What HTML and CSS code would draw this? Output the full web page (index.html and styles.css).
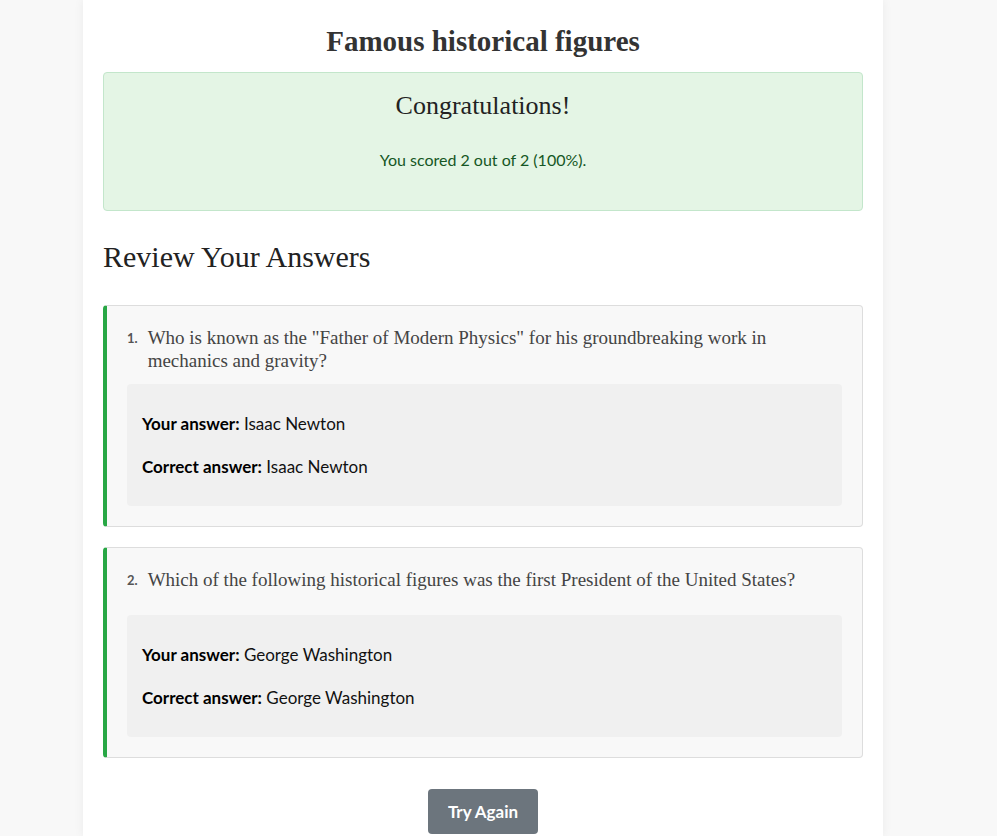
FILE: index.html
```html
<!DOCTYPE html>
<html lang="en">
  <head>
    <meta charset="UTF-8" />
    <meta name="viewport" content="width=device-width, initial-scale=1.0" />
    <title>Quiz results</title>
    <link rel="stylesheet" href="styles.css">
  </head>
  <body>
    <main class="quiz">
      <h1 class="quiz-title">Famous historical figures</h1>

      <div class="result">
        <h2>Congratulations!</h2>
        <p>You scored 2 out of 2 (100%).</p>
      </div>

      <h2 class="review-title">Review Your Answers</h2>

      <div class="review-item correct">
        <div class="question">
          <span class="num">1.</span>
          <span class="text">Who is known as the "Father of Modern Physics" for his groundbreaking work in mechanics and gravity?</span>
        </div>
        <div class="answers">
          <p><strong>Your answer:</strong> Isaac Newton</p>
          <p><strong>Correct answer:</strong> Isaac Newton</p>
        </div>
      </div>

      <div class="review-item correct">
        <div class="question">
          <span class="num">2.</span>
          <span class="text">Which of the following historical figures was the first President of the United States?</span>
        </div>
        <div class="answers">
          <p><strong>Your answer:</strong> George Washington</p>
          <p><strong>Correct answer:</strong> George Washington</p>
        </div>
      </div>

      <div class="actions">
        <button class="btn">Try Again</button>
      </div>
    </main>
  </body>
</html>
```

FILE: styles.css
```css
* {
  box-sizing: border-box;
}
body {
  margin: 0;
  padding-right: 31px;
  background-color: #f8f8f8;
  font-family: Lato, "Noto Sans", sans-serif;
  color: #222;
}
.quiz {
  width: 800px;
  margin: 0 auto;
  padding: 20px 20px 0;
  background-color: #fff;
  box-shadow: 0 0 10px rgba(0, 0, 0, 0.06);
  min-height: 100vh;
}
.quiz-title {
  margin: 4px 0 14px;
  text-align: center;
  font-family: "Liberation Serif", serif;
  font-size: 29px;
  font-weight: bold;
  color: #333;
  line-height: 34px;
}
.result {
  padding: 18px 20px 38px;
  text-align: center;
  background-color: #e4f5e5;
  border: 1px solid #c3e6cb;
  border-radius: 4px;
}
.result h2 {
  margin: 0;
  font-family: "Liberation Serif", serif;
  font-weight: normal;
  font-size: 26px;
  line-height: 30px;
  color: #222;
}
.result p {
  margin: 27px 0 0;
  font-size: 16px;
  line-height: 24px;
  color: #155724;
}
.review-title {
  margin: 28px 0 30px;
  font-family: "Liberation Serif", serif;
  font-weight: normal;
  font-size: 30px;
  line-height: 36px;
  color: #222;
}
.review-item {
  margin-bottom: 20px;
  padding: 20px;
  background-color: #f8f8f8;
  border: 1px solid #ddd;
  border-left: 4px solid #28a745;
  border-radius: 4px;
}
.question {
  display: flex;
  gap: 10px;
  min-height: 35px;
  margin-bottom: 12px;
}
.question .num {
  font-size: 13px;
  font-weight: bold;
  color: #555;
  line-height: 23px;
  padding-top: 1px;
}
.question .text {
  font-family: "Liberation Serif", serif;
  font-size: 19px;
  line-height: 23px;
  color: #444;
}
.answers {
  padding: 10px 15px;
  background-color: #f0f0f0;
  border-radius: 4px;
}
.answers p {
  margin: 16px 0;
  font-size: 17px;
  line-height: 27px;
  color: #111;
}
.answers strong {
  color: #000;
}
.actions {
  padding: 11px 0 0;
  text-align: center;
}
.btn {
  padding: 12px 20px;
  font-family: Lato, "Noto Sans", sans-serif;
  font-size: 17px;
  font-weight: bold;
  color: #fff;
  background-color: #6c757d;
  border: none;
  border-radius: 4px;
}
```
